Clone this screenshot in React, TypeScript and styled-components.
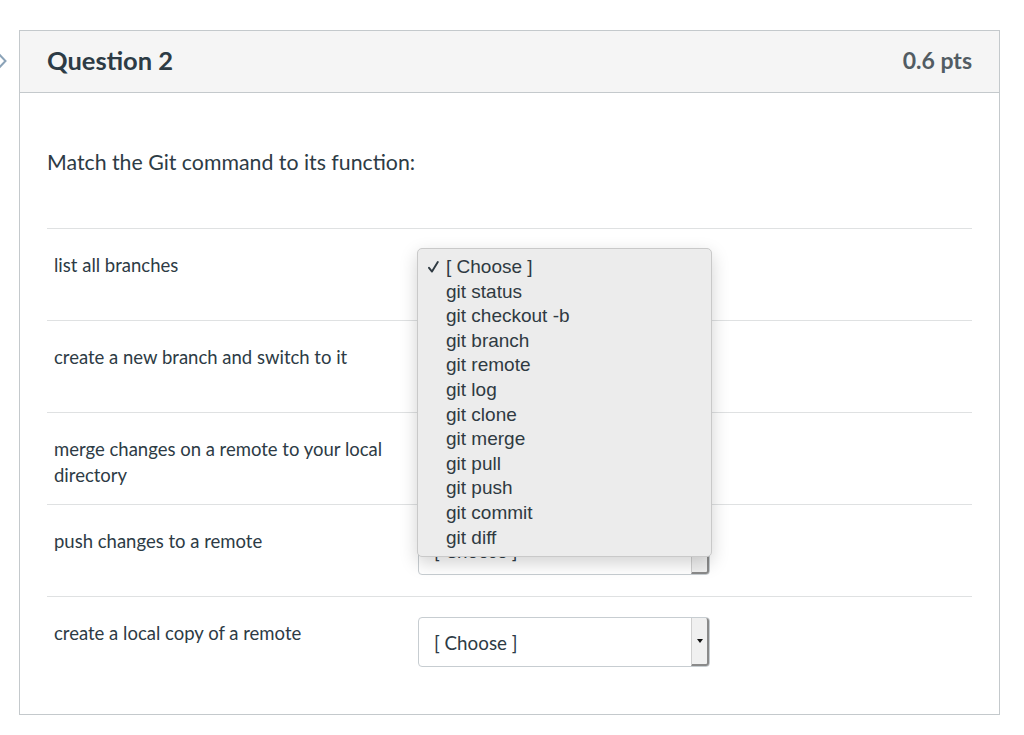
import styled, { createGlobalStyle } from 'styled-components';

const GlobalStyle = createGlobalStyle`
  body {
    background: #ffffff;
    font-family: Lato, 'Noto Sans', sans-serif;
    margin: 0;
  }
`;

const Page = styled('main')`
  display: flex;
  padding-top: 30px;
`;

const Gutter = styled('aside')`
  overflow: hidden;
  padding-top: 20px;
  width: 19px;
`;

const Card = styled('section')`
  border: 1px solid #c4c9cc;
  box-sizing: border-box;
  width: 981px;
`;

const Header = styled('header')`
  align-items: center;
  background: #f5f5f5;
  border-bottom: 1px solid #c4c9cc;
  box-sizing: border-box;
  display: flex;
  height: 62px;
  justify-content: space-between;
  padding: 0 27px 4px;
`;

const Title = styled('h2')`
  color: #2d3b45;
  font-size: 25.5px;
  font-weight: 700;
  margin: 0;
`;

const Points = styled('span')`
  color: #525c63;
  font-size: 23px;
  font-weight: 700;
`;

const Body = styled('div')`
  padding: 54px 27px 26px;
`;

const Prompt = styled('p')`
  color: #2d3b45;
  font-size: 21.3px;
  line-height: 30px;
  margin: 0 0 51px;
`;

const Row = styled('div')`
  border-top: 1px solid #dfe1e2;
  box-sizing: border-box;
  display: flex;
  height: 92px;
  padding-top: 20px;
`;

const Label = styled('div')`
  box-sizing: border-box;
  color: #2d3b45;
  font-size: 18.5px;
  line-height: 26px;
  padding: 3px 20px 0 7px;
  width: 371px;
`;

const SelectBox = styled('div')`
  align-items: stretch;
  background: #ffffff;
  border: 1px solid #c7cdd1;
  border-radius: 4px;
  box-sizing: border-box;
  display: flex;
  height: 50px;
  position: relative;
  width: 292px;
`;

const SelectText = styled('span')`
  align-items: center;
  color: #2d3b45;
  display: flex;
  flex: 1;
  font-size: 18.8px;
  padding-left: 15px;
`;

const SelectButton = styled('span')`
  align-items: center;
  background: #f0f0f0;
  border-bottom: 2px solid #8a8a8a;
  border-left: 1px solid #cfcfcf;
  border-radius: 0 3px 3px 0;
  border-right: 2px solid #8a8a8a;
  display: flex;
  justify-content: center;
  width: 15px;
`;

const Triangle = styled('span')`
  border-left: 3px solid transparent;
  border-right: 3px solid transparent;
  border-top: 4px solid #111111;
  height: 0;
  width: 0;
`;

const Menu = styled('ul')`
  background: #ececec;
  border: 1px solid #c9c9c9;
  border-radius: 5px;
  box-shadow: 0 6px 18px rgba(0, 0, 0, 0.18);
  box-sizing: border-box;
  font-family: 'Liberation Sans', Arial, sans-serif;
  left: -2px;
  list-style: none;
  margin: 0;
  padding: 6px 0;
  position: absolute;
  top: -2px;
  width: 295px;
  z-index: 2;
`;

const MenuItem = styled('li')`
  align-items: center;
  color: #2f3a42;
  display: flex;
  font-size: 19px;
  height: 24.6px;
  line-height: 24.6px;
  padding-left: 10px;
`;

const Check = styled('span')`
  align-items: center;
  display: flex;
  width: 18px;
`;

const ROWS = [
  'list all branches',
  'create a new branch and switch to it',
  'merge changes on a remote to your local directory',
  'push changes to a remote',
  'create a local copy of a remote',
];

const OPTIONS = [
  '[ Choose ]',
  'git status',
  'git checkout -b',
  'git branch',
  'git remote',
  'git log',
  'git clone',
  'git merge',
  'git pull',
  'git push',
  'git commit',
  'git diff',
];

const Chevron = () => (
  <svg width="12" height="22" viewBox="0 0 12 22" style={{ marginLeft: -4 }}>
    <polyline points="1,2 9.5,11 1,20" fill="none" stroke="#8ba3b8" strokeWidth="2" />
  </svg>
);

const CheckMark = () => (
  <svg width="11" height="12" viewBox="0 0 11 12">
    <path d="M1 6.8 L4 10.6 L9.8 1" fill="none" stroke="#2f3a42" strokeWidth="1.9" strokeLinecap="round" strokeLinejoin="round" />
  </svg>
);

const App: React.FC = () => {
  return (
    <Page>
      <GlobalStyle />
      <Gutter>
        <Chevron />
      </Gutter>
      <Card>
        <Header>
          <Title>Question 2</Title>
          <Points>0.6 pts</Points>
        </Header>
        <Body>
          <Prompt>Match the Git command to its function:</Prompt>
          {
            ROWS.map((label, index) => (
              <Row key={ label }>
                <Label>{ label }</Label>
                <SelectBox>
                  <SelectText>[ Choose ]</SelectText>
                  <SelectButton><Triangle /></SelectButton>
                  { index === 0 &&
                    <Menu>
                      {
                        OPTIONS.map((option, i) => (
                          <MenuItem key={ option }>
                            <Check>{ i === 0 && <CheckMark /> }</Check>
                            { option }
                          </MenuItem>
                        ))
                      }
                    </Menu>
                  }
                </SelectBox>
              </Row>
            ))
          }
        </Body>
      </Card>
    </Page>
  );
};

export default App;
